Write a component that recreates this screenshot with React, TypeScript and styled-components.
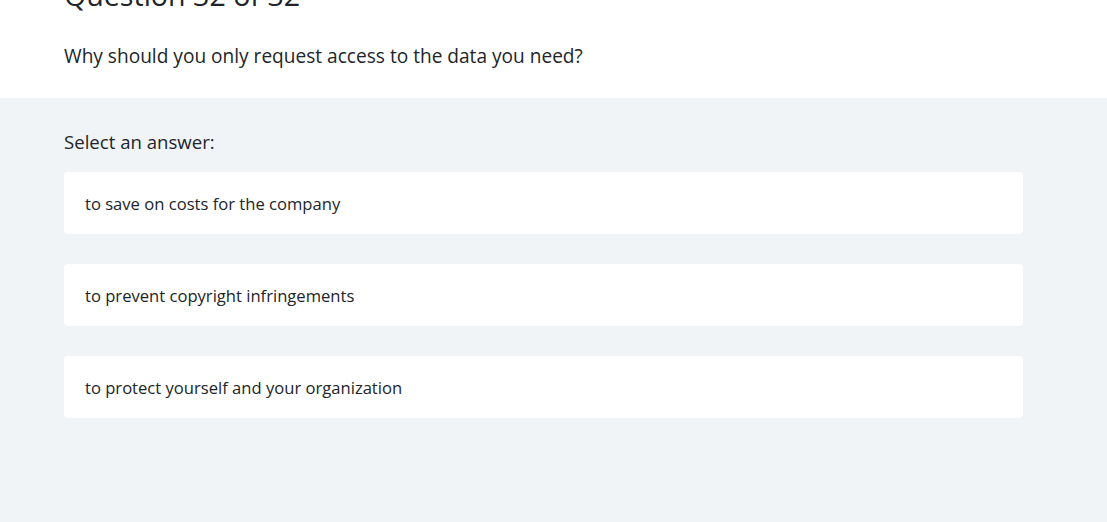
import React from "react";
import styled, { createGlobalStyle } from "styled-components";

const GlobalStyle = createGlobalStyle`
  html, body {
    margin: 0;
    padding: 0;
    background: #f1f4f7;
    font-family: "Open Sans", "Noto Sans", "Liberation Sans", sans-serif;
    color: #212529;
  }
`;

const Page = styled.div`
  height: 522px;
  overflow: hidden;
  display: flex;
  flex-direction: column;
`;

const QuestionHeader = styled.header`
  background: #ffffff;
  padding: 0 64px;
  height: 98px;
  display: flex;
  flex-direction: column;
  flex-shrink: 0;
  h1 {
    margin: -25px 0 0;
    font-weight: 400;
    font-size: 28.6px;
    line-height: 40px;
    color: #212529;
  }
  p {
    margin: 27px 0 0;
    font-size: 19.1px;
    line-height: 28px;
  }
`;

const AnswerSection = styled.section`
  flex: 1;
  padding: 30px 84px 0 64px;
  display: flex;
  flex-direction: column;
`;

const Prompt = styled.div`
  font-size: 18.6px;
  line-height: 28px;
  margin-bottom: 16px;
`;

const AnswerList = styled.div`
  display: flex;
  flex-direction: column;
  gap: 30px;
`;

const Answer = styled.button`
  all: unset;
  box-sizing: border-box;
  width: 959px;
  height: 62px;
  padding: 0 21px;
  background: #ffffff;
  border-radius: 4px;
  display: flex;
  align-items: center;
  font-family: inherit;
  font-size: 16.6px;
  color: #212529;
  cursor: pointer;
`;

const answers = [
  "to save on costs for the company",
  "to prevent copyright infringements",
  "to protect yourself and your organization",
];

const App = () => {
  return (
    <Page>
      <GlobalStyle />
      <QuestionHeader>
        <h1>Question 32 of 32</h1>
        <p>Why should you only request access to the data you need?</p>
      </QuestionHeader>
      <AnswerSection>
        <Prompt>Select an answer:</Prompt>
        <AnswerList>
          {answers.map((a) => (
            <Answer key={a}>{a}</Answer>
          ))}
        </AnswerList>
      </AnswerSection>
    </Page>
  );
};

export default App;
